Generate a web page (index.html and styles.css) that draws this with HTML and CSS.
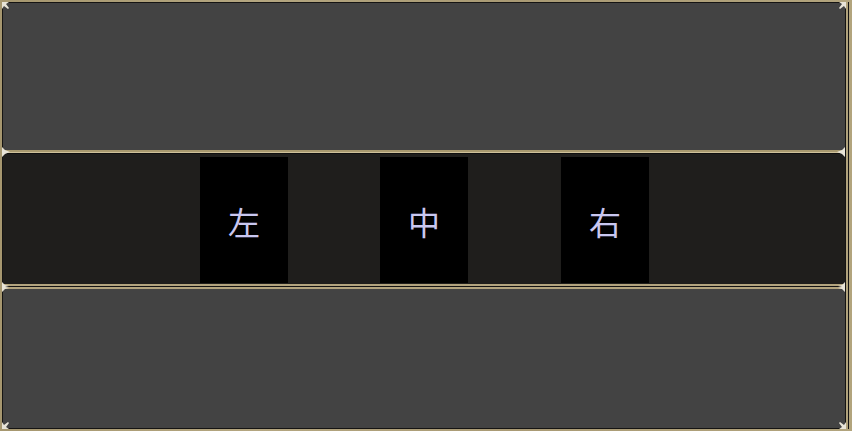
FILE: index.html
```html
<!DOCTYPE html>
<html lang="zh">
<head>
<meta charset="utf-8">
<link rel="stylesheet" href="styles.css">
</head>
<body>
<div class="frame">
  <div class="inner">
    <div class="panel top"></div>
    <div class="divider single"></div>
    <div class="panel mid">
      <div class="cell">左</div>
      <div class="cell">中</div>
      <div class="cell shift">右</div>
    </div>
    <div class="divider double"></div>
    <div class="panel bottom"></div>
  </div>
  <svg class="orn tl" width="8" height="8" viewBox="0 0 8 8"><path d="M0 0 L7 0 L4 2 L7 6 L6 7 L2 4 L0 7 Z" fill="#e8e4d8"/></svg>
  <svg class="orn tr" width="8" height="8" viewBox="0 0 8 8"><path d="M8 0 L1 0 L4 2 L1 6 L2 7 L6 4 L8 7 Z" fill="#e8e4d8"/></svg>
  <svg class="orn bl" width="8" height="8" viewBox="0 0 8 8"><path d="M0 8 L7 8 L4 6 L7 2 L6 1 L2 4 L0 1 Z" fill="#e8e4d8"/></svg>
  <svg class="orn br" width="8" height="8" viewBox="0 0 8 8"><path d="M8 8 L1 8 L4 6 L1 2 L2 1 L6 4 L8 1 Z" fill="#e8e4d8"/></svg>
  <svg class="orn l1" width="8" height="10" viewBox="0 0 8 10"><path d="M0 0 L3 3 L8 5 L3 7 L0 10 Z" fill="#e8e4d8"/></svg>
  <svg class="orn r1" width="8" height="10" viewBox="0 0 8 10"><path d="M8 0 L5 3 L0 5 L5 7 L8 10 Z" fill="#e8e4d8"/></svg>
  <svg class="orn l2" width="8" height="10" viewBox="0 0 8 10"><path d="M0 0 L3 3 L7 4 L3 5 L7 6 L3 7 L0 10 Z" fill="#e8e4d8"/></svg>
  <svg class="orn r2" width="8" height="10" viewBox="0 0 8 10"><path d="M8 0 L5 3 L1 4 L5 5 L1 6 L5 7 L8 10 Z" fill="#e8e4d8"/></svg>
</div>
</body>
</html>
```
FILE: styles.css
```css
html, body {
  margin: 0;
  padding: 0;
}
body {
  width: 852px;
  height: 431px;
  overflow: hidden;
  background: #ab9c77;
  font-family: "Noto Sans CJK SC", "Noto Sans", sans-serif;
}
.frame {
  position: relative;
  width: 852px;
  height: 431px;
  box-sizing: border-box;
  padding: 2px 6px 2px 2px;
  background: linear-gradient(90deg, #a6976f, #b4a680 30%, #a99a74 60%, #b2a47d);
}
.inner {
  display: flex;
  flex-direction: column;
  height: 427px;
  box-sizing: border-box;
  border: 1px solid #151413;
  box-shadow: 2px 0 0 #b0a27c, 3px 0 0 #151413;
}
.panel.top {
  height: 147px;
  background: #434343;
}
.divider.single {
  height: 4px;
  box-sizing: border-box;
  border-top: 2px solid #a8996f;
  border-bottom: 1px solid #0f0f0e;
  background: #cfc19a;
}
.panel.mid {
  height: 130px;
  box-sizing: border-box;
  padding: 3px 0 1px 197px;
  background: #1f1e1c;
  display: flex;
  gap: 92px;
}
.cell {
  width: 88px;
  background: #000;
  color: #c9c7f0;
  font-size: 32px;
  display: flex;
  align-items: center;
  justify-content: center;
  padding-top: 2px;
  box-sizing: border-box;
}
.cell.shift {
  margin-left: 1px;
}
.divider.double {
  height: 5px;
  box-sizing: border-box;
  border-top: 2px solid #b3a47e;
  border-bottom: 2px solid #b3a47e;
  background: #151413;
}
.panel.bottom {
  height: 139px;
  background: #434343;
}
.orn {
  position: absolute;
}
.orn.tl { left: 2px; top: 2px; }
.orn.tr { left: 838px; top: 2px; }
.orn.bl { left: 2px; top: 421px; }
.orn.br { left: 838px; top: 421px; }
.orn.l1 { left: 2px; top: 147px; }
.orn.r1 { left: 837px; top: 147px; }
.orn.l2 { left: 2px; top: 282px; }
.orn.r2 { left: 837px; top: 282px; }
```
